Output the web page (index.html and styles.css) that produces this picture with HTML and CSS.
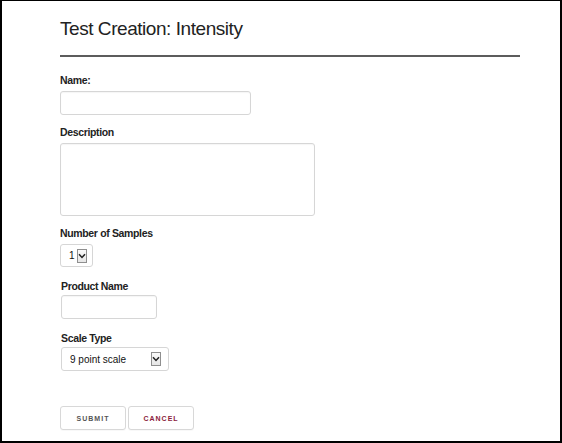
FILE: index.html
```html
<!DOCTYPE html>
<html>
<head>
<meta charset="utf-8">
<link rel="stylesheet" href="styles.css">
</head>
<body>
<div class="frame">
  <div class="page">
    <h1 class="title">Test Creation: Intensity</h1>
    <div class="rule"></div>
    <form class="form">
      <div class="field">
        <label class="label">Name:</label>
        <input class="input input-name" type="text">
      </div>
      <div class="field">
        <label class="label">Description</label>
        <textarea class="input input-desc"></textarea>
      </div>
      <div class="field">
        <label class="label">Number of Samples</label>
        <div class="select select-num">
          <span class="select-value">1</span>
          <span class="select-arrow"><svg width="8" height="6" viewBox="0 0 8 6"><path d="M1 1.2 L4 4.4 L7 1.2" fill="none" stroke="#222" stroke-width="1.5"/></svg></span>
        </div>
      </div>
      <div class="field field-tight">
        <label class="label">Product Name</label>
        <input class="input input-product" type="text">
      </div>
      <div class="field field-tight">
        <label class="label">Scale Type</label>
        <div class="select select-scale">
          <span class="select-value">9 point scale</span>
          <span class="select-arrow"><svg width="8" height="6" viewBox="0 0 8 6"><path d="M1 1.2 L4 4.4 L7 1.2" fill="none" stroke="#222" stroke-width="1.5"/></svg></span>
        </div>
      </div>
      <div class="actions">
        <button class="btn btn-submit" type="button">Submit</button>
        <button class="btn btn-cancel" type="button">Cancel</button>
      </div>
    </form>
  </div>
</div>
</body>
</html>
```

FILE: styles.css
```css
* { box-sizing: border-box; }
html, body { margin: 0; padding: 0; background: #fff; }
body { font-family: "Liberation Sans", Arial, sans-serif; color: #222; }

.frame {
  width: 562px;
  height: 443px;
  border: 2px solid #000;
  border-top-width: 1px;
  background: #fff;
}

.page {
  padding: 17px 0 0 58px;
  width: 520px;
}

.title {
  margin: 0;
  font-size: 19px;
  line-height: 22px;
  font-weight: normal;
  letter-spacing: -0.45px;
  color: #222;
}

.rule {
  margin-top: 15px;
  height: 2px;
  width: 460px;
  background: #5c5c5c;
}

.form { display: flex; flex-direction: column; }

.field { display: flex; flex-direction: column; align-items: flex-start; margin-top: 11px; }
.field:first-child { margin-top: 17px; }
.field-tight { margin-top: 13px; padding-left: 1px; }

.label {
  font-size: 10.5px;
  line-height: 12px;
  font-weight: bold;
  letter-spacing: -0.35px;
  color: #222;
  margin-bottom: 5px;
}
.field-tight .label { margin-bottom: 3px; }

.input {
  display: block;
  border: 1px solid #d6d6d6;
  border-radius: 3px;
  background: #fff;
  box-shadow: inset 0 1px 1px rgba(0,0,0,0.04);
  font: inherit;
  margin: 0;
  padding: 0;
  outline: none;
}
.input-name { width: 191px; height: 24px; }
.input-desc { width: 255px; height: 73px; resize: none; }
.input-product { width: 96px; height: 24px; }

.select {
  display: flex;
  align-items: center;
  border: 1px solid #d6d6d6;
  border-radius: 3px;
  background: #fff;
  font-size: 10px;
  color: #111;
}
.select-num { width: 33px; height: 23px; padding-left: 8px; gap: 2px; }
.select-scale { width: 108px; height: 24px; padding-left: 8px; justify-content: space-between; padding-right: 7px; }

.select-arrow {
  display: flex;
  align-items: center;
  justify-content: center;
  width: 10px;
  height: 14px;
  border: 1px solid #8f8f8f;
  background: linear-gradient(#fafafa, #e6e6e6);
}

.actions { display: flex; gap: 2px; margin-top: 35px; }

.btn {
  width: 66px;
  height: 24px;
  border: 1px solid #d8d8d8;
  border-radius: 3px;
  background: #fff;
  font-family: "Liberation Sans", Arial, sans-serif;
  font-size: 7px;
  font-weight: bold;
  text-transform: uppercase;
  letter-spacing: 1px;
  padding: 0;
  box-shadow: 0 1px 1px rgba(0,0,0,0.03);
}
.btn-submit { color: #555; }
.btn-cancel { color: #8a1c3c; }
```
